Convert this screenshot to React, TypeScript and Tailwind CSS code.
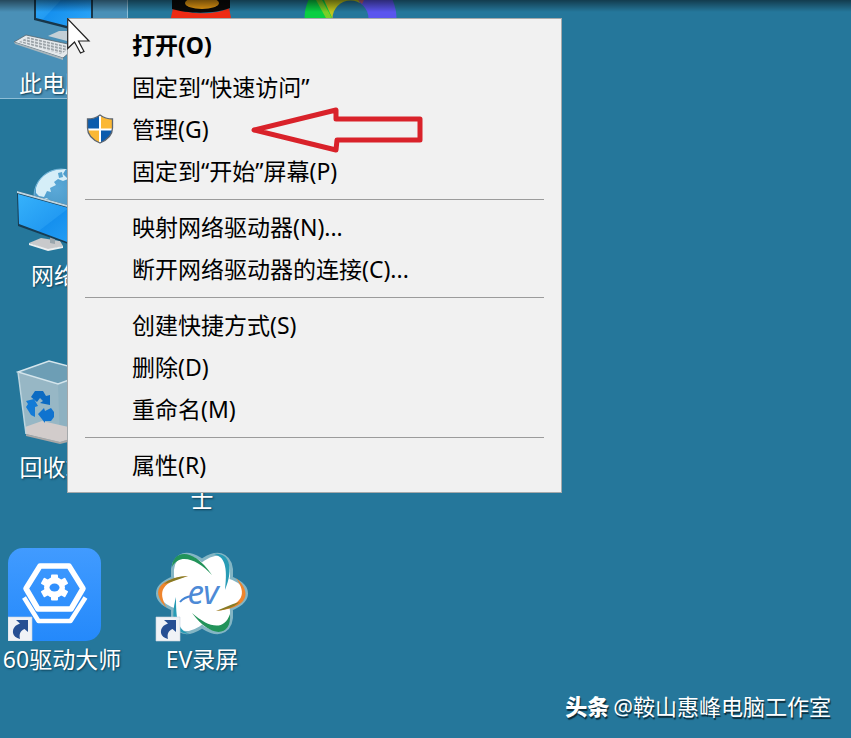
import * as React from "react";
import clsx from "clsx";

interface MenuEntry {
  label: string;
  isDefault?: boolean;
  icon?: React.ReactNode;
}

interface Shortcut {
  label: string;
  icon: React.ReactNode;
  /** Grid cell the icon sits in. */
  cell: string;
  selected?: boolean;
  labelClass?: string;
}

/** Menu entries, one inner list for each block between separators. */
const menuGroups: MenuEntry[][] = [
  [
    { label: "打开(O)", isDefault: true },
    { label: "固定到“快速访问”" },
    { label: "管理(G)", icon: <ShieldIcon /> },
    { label: "固定到“开始”屏幕(P)" },
  ],
  [{ label: "映射网络驱动器(N)..." }, { label: "断开网络驱动器的连接(C)..." }],
  [{ label: "创建快捷方式(S)" }, { label: "删除(D)" }, { label: "重命名(M)" }],
  [{ label: "属性(R)" }],
];

const shortcuts: Shortcut[] = [
  { label: "此电脑", icon: <ComputerIcon />, cell: "col-start-1 row-start-1", selected: true },
  { label: "", icon: <PenguinIcon />, cell: "col-start-2 row-start-1" },
  { label: "", icon: <ColorRingIcon />, cell: "col-start-3 row-start-1" },
  { label: "网络", icon: <NetworkIcon />, cell: "col-start-1 row-start-2" },
  { label: "回收站", icon: <RecycleBinIcon />, cell: "col-start-1 row-start-3" },
  // last line of a two-line label
  { label: "士", icon: null, cell: "col-start-2 row-start-3", labelClass: "pt-8" },
  { label: "60驱动大师", icon: <DriverIcon />, cell: "col-start-1 row-start-4", labelClass: "pl-4" },
  { label: "EV录屏", icon: <EvIcon />, cell: "col-start-2 row-start-4" },
];

export default function App() {
  return (
    <main className="relative h-screen overflow-hidden bg-[#25779b] font-['Noto_Sans','Noto_Sans_CJK_SC',sans-serif]">
      {/* Desktop grid, scrolled a little past the top left corner */}
      <div className="-mt-7 -ml-5 grid grid-cols-[repeat(3,148px)] grid-rows-[repeat(4,192px)] items-start">
        {shortcuts.map((item, i) => (
          <DesktopIcon key={i} item={item} />
        ))}
      </div>

      <div className="absolute inset-x-0 top-0 h-3 bg-linear-to-b from-black/50 to-transparent" />

      <ContextMenu />
      <PointerArrow />
      <Cursor />

      <p className="absolute right-5 bottom-[17px] flex items-center gap-1 text-[22px] leading-[30px] text-white [text-shadow:1px_2px_1px_#0b2a38]">
        <span className="font-black">头条</span>
        <span>@鞍山惠峰电脑工作室</span>
      </p>
    </main>
  );
}

function DesktopIcon({ item }: { item: Shortcut }) {
  return (
    <button
      type="button"
      className={clsx(
        "flex flex-col items-center gap-[3px]",
        item.cell,
        item.selected && "border-r border-b border-[#8dbdd6] bg-[#4a90b7]"
      )}
    >
      <span className="block h-[93px] w-[93px]">{item.icon}</span>
      <span
        className={clsx(
          "text-[23px] leading-[30px] whitespace-nowrap text-white [text-shadow:1px_1px_2px_#0b3a50]",
          item.labelClass
        )}
      >
        {item.label}
      </span>
    </button>
  );
}

function ContextMenu() {
  return (
    <div
      role="menu"
      className="absolute top-[18px] left-[67px] w-[495px] border border-[#a5a9ab] bg-[#f1f1f1] pt-1.5 pb-[5px]"
    >
      {menuGroups.map((group, i) => (
        <React.Fragment key={i}>
          {i > 0 && <hr className="mx-[17px] mt-1.5 mb-[7px] border-[#9b9b9b]" />}
          {group.map((entry) => (
            <button
              key={entry.label}
              type="button"
              role="menuitem"
              className="flex h-[42px] w-full items-center pb-0.5 text-left text-[23px] leading-[30px] text-black"
            >
              <span className="flex w-16 justify-center">{entry.icon}</span>
              <span className={clsx(entry.isDefault && "font-bold")}>{entry.label}</span>
            </button>
          ))}
        </React.Fragment>
      ))}
    </div>
  );
}

/* ── Overlays ── */

function PointerArrow() {
  return (
    <svg className="absolute top-[106px] left-[250px]" width="174" height="48" viewBox="0 0 174 48" fill="none">
      <path
        d="M4 24 86 4V13H170V34H87L86 44Z"
        stroke="#d9222a"
        strokeWidth="5"
        strokeLinejoin="round"
      />
    </svg>
  );
}

function Cursor() {
  return (
    <svg className="absolute top-[18px] left-[67px]" width="24" height="37" viewBox="0 0 24 37">
      <path d="M.7.8V30.500L7.500 24 13.500 35 17 33.500 11.500 23H22Z" fill="#fff" stroke="#222" strokeWidth="1.200" />
    </svg>
  );
}

/* ── Icons ── */

function ShieldIcon() {
  return (
    <svg width="28" height="30" viewBox="0 0 28 30">
      <defs>
        <clipPath id="shield">
          <path d="M14 1C10 4 6 5 1.500 5V14C1.500 21 7 26 14 29 21 26 26.500 21 26.500 14V5C22 5 18 4 14 1Z" />
        </clipPath>
      </defs>
      <g clipPath="url(#shield)">
        <path d="M0 0H28V30H0Z" fill="#fff" />
        <path d="M0 0H13V14.500H0ZM15 16.500H28V30H15Z" fill="#0b5cad" />
        <path d="M15 0H28V14.500H15ZM0 16.500H13V30H0Z" fill="#fbb834" />
      </g>
      <path
        d="M14 1C10 4 6 5 1.500 5V14C1.500 21 7 26 14 29 21 26 26.500 21 26.500 14V5C22 5 18 4 14 1Z"
        fill="none"
        stroke="#5d6670"
        strokeWidth="1.300"
      />
    </svg>
  );
}

function ScreenGradient({ id }: { id: string }) {
  return (
    <linearGradient id={id} x1="0" y1="0" x2="1" y2="1">
      <stop offset="0" stopColor="#36b2fb" />
      <stop offset=".45" stopColor="#239bf2" />
      <stop offset=".46" stopColor="#1590ee" />
      <stop offset="1" stopColor="#2fa8fa" />
    </linearGradient>
  );
}

function ComputerIcon() {
  return (
    <svg viewBox="0 0 93 93">
      <defs>
        <ScreenGradient id="pc-screen" />
        <pattern id="keys" width="4" height="3" patternUnits="userSpaceOnUse" patternTransform="skewY(13)">
          <path d="M0 0H3V2H0Z" fill="#9ba3a8" />
        </pattern>
      </defs>
      <path d="M41 64 52 59H75L72 67 60 69Z" fill="#c3cfd6" />
      <path d="M27 6 86 0V63L27 48Z" fill="#17364a" />
      <path d="M29 7 84 1V60L29 46Z" fill="url(#pc-screen)" />
      <path d="M7 70 19 63 70 74 56 86Z" fill="#e4e9ec" stroke="#56666f" strokeWidth=".8" />
      <path d="M12 70 21 65 65 75 54 82Z" fill="url(#keys)" />
      <path d="M7 70 56 86V88L8 72Z" fill="#a9b6bd" />
    </svg>
  );
}

function NetworkIcon() {
  return (
    <svg viewBox="0 0 93 93">
      <defs>
        <ScreenGradient id="net-screen" />
        <radialGradient id="globe" cx=".4" cy=".35" r=".7">
          <stop offset="0" stopColor="#5ba9d8" />
          <stop offset="1" stopColor="#3f8ebe" />
        </radialGradient>
      </defs>
      <circle cx="53" cy="32" r="27" fill="url(#globe)" stroke="#75b6d8" />
      <path
        d="M28 24C31 14 39 8 48 6L58 5 55 10 60 15 55 17 50 15 46 18 48 21 42 24 43 28 39 27 36 33 31 32 28 29Z"
        fill="#d5eef8"
      />
      <path d="M32 35 39 34 43 38 41 42 34 40Z" fill="#c2e4f2" />
      <path d="M50 9 54 8 55 13 51 14Z" fill="#58a5d0" />
      <path d="M21 79 33 74 52 77 55 82 40 86Z" fill="#c8c9cb" />
      <path d="M21 79 40 85 55 82V84L40 87 21 81Z" fill="#eceff0" />
      <path d="M42 70H47V80L42 79Z" fill="#9aa6ad" />
      <path d="M9 27 88 49V90L10 62Z" fill="#173c53" />
      <path d="M9 27 88 49V51L9 29Z" fill="#bed6e2" />
      <path d="M10 30 86 51V88L11 60Z" fill="url(#net-screen)" />
    </svg>
  );
}

function RecycleBinIcon() {
  return (
    <svg viewBox="0 0 93 93">
      <path d="M10 16 41 5 83 16 72 80 52 87 18 78Z" fill="#8db1c1" />
      <path d="M10 16 41 5 83 16 50 28Z" fill="#6d9eb5" />
      <path d="M10 16 50 28 52 86 18 78Z" fill="#97b7c5" />
      <path d="M17 71 34 65 74 74 72 80 52 86 18 78Z" fill="#d2cccb" />
      <path d="M18 78 52 86 72 80V83L52 88 18 80Z" fill="#a9a7a6" />
      <path d="M10 16 41 5 83 16 50 28Z" fill="none" stroke="#d4e5ec" strokeWidth="1.500" />
      <path d="M10 16 18 78" stroke="#bdd5df" strokeWidth="1.500" />
      {/* Recycling arrows */}
      <path d="M23 41 27 35 35 35 38 40 42 39V49L32 47 35 45 32 42 29 46Z" fill="#0c6bc2" />
      <path d="M18 45 26 43 30 50 27 51V61L23 59 18 51 20 48Z" fill="#147bd6" />
      <path d="M30 58 36 52 37 55 43 52 46 56V61L43 65H37V67Z" fill="#1073cf" />
    </svg>
  );
}

function PenguinIcon() {
  return (
    <svg viewBox="0 0 93 93">
      <path d="M17 36C34 43 60 43 73 36L78 60H12Z" fill="#ee2b14" />
      <path d="M16 0H74V36C60 42 32 42 16 37Z" fill="#090909" />
      <ellipse cx="46" cy="31" rx="17" ry="6" fill="#e79a12" />
    </svg>
  );
}

function ColorRingIcon() {
  return (
    <svg viewBox="0 0 93 93">
      <defs>
        <mask id="ring">
          <circle cx="46.500" cy="46.500" r="46" fill="#fff" />
          <circle cx="46.500" cy="46.500" r="18" fill="#000" />
        </mask>
      </defs>
      <g mask="url(#ring)">
        <path d="M0 0H93V93H0Z" fill="#5a55ee" />
        <path d="M0 0H14L30 50V93H0Z" fill="#09cf42" />
        <path d="M12 10H53L56 34 46 46 29 48Z" fill="#bfc51d" />
        <path d="M12 10 18 28 29 48 23 48 12 28Z" fill="#79cf27" />
        <path d="M50 10 62 24 58 32 53 27Z" fill="#c06178" />
      </g>
    </svg>
  );
}

function ShortcutBadge() {
  return (
    <g>
      <path d="M0 69H24V93H0Z" fill="#f0f2f6" stroke="#c9d3df" strokeWidth=".6" />
      <path d="M8 72H20V84L16.500 81C12 83 11 86 12 91 8 90 5.500 88 5 85 4.500 80 7.500 77 12 75.500Z" fill="#264f93" />
    </g>
  );
}

function DriverIcon() {
  return (
    <svg viewBox="0 0 93 93">
      <defs>
        <linearGradient id="driver" x1="0" y1="0" x2="0" y2="1">
          <stop offset="0" stopColor="#419bff" />
          <stop offset="1" stopColor="#2489fb" />
        </linearGradient>
      </defs>
      <rect width="93" height="93" rx="15" fill="url(#driver)" />
      <g fill="none" stroke="#fff" strokeLinejoin="round">
        <path d="M32 18H61L75 40.500 63 61H30L18 40.500Z" strokeWidth="5.500" />
        <path d="M16 49.500 30.500 73H62.500L77.500 49.500" strokeWidth="4.500" />
      </g>
      <g transform="translate(46.500 39.500)">
        <g fill="#fff">
          <circle r="10.500" />
          <rect x="-3.500" y="-13" width="7" height="26" rx="1" />
          <rect x="-3.500" y="-14" width="7" height="28" rx="1" transform="rotate(60)" />
          <rect x="-3.500" y="-14" width="7" height="28" rx="1" transform="rotate(120)" />
        </g>
        <ellipse rx="5" ry="4" fill="#3090fd" />
      </g>
      <ShortcutBadge />
    </svg>
  );
}

function EvIcon() {
  return (
    <svg viewBox="0 0 93 93" className="overflow-visible">
      <defs>
        <g id="petals">
          <ellipse cx="46" cy="45.500" rx="43" ry="19" />
          <ellipse cx="46" cy="45.500" rx="42" ry="21" transform="rotate(59 46 45.500)" />
          <ellipse cx="46" cy="45.500" rx="42" ry="21" transform="rotate(121 46 45.500)" />
        </g>
      </defs>
      <use href="#petals" fill="#83b5c4" stroke="#83b5c4" strokeWidth="6" />
      <use href="#petals" fill="#fff" />
      <path d="M16 19C17 3 36 -2 56 27 42 12 24 4 16 19Z" fill="#22935a" />
      <path d="M58 6C72 4 79 18 69 42 71 24 71 9 58 6Z" fill="#279bb5" />
      <path d="M80 30C97 45 92 60 60 63 88 56 91 46 80 30Z" fill="#ee852d" />
      <path d="M60 63 77 56 84 54Q74 62 60 63Z" fill="#877b25" />
      <path d="M74 66C76 88 56 92 36 65 52 79 68 84 74 66Z" fill="#22935a" />
      <path d="M34 86C18 86 14 72 20 49 20 70 21 82 34 86Z" fill="#279bb5" />
      <path d="M11 60C-5 45 0 31 32 28 6 34 1 43 11 60Z" fill="#ee852d" />
      <path d="M32 28 15 34 8 36Q17 28 32 28Z" fill="#877b25" />
      <path d="M24 54Q28 49 36 48" fill="none" stroke="#4384d4" strokeWidth="2" />
      <text
        x="47"
        y="56"
        textAnchor="middle"
        fontFamily="Noto Sans, sans-serif"
        fontSize="33"
        fontStyle="italic"
        fill="#4d8ad6"
      >
        ev
      </text>
      <ShortcutBadge />
    </svg>
  );
}
